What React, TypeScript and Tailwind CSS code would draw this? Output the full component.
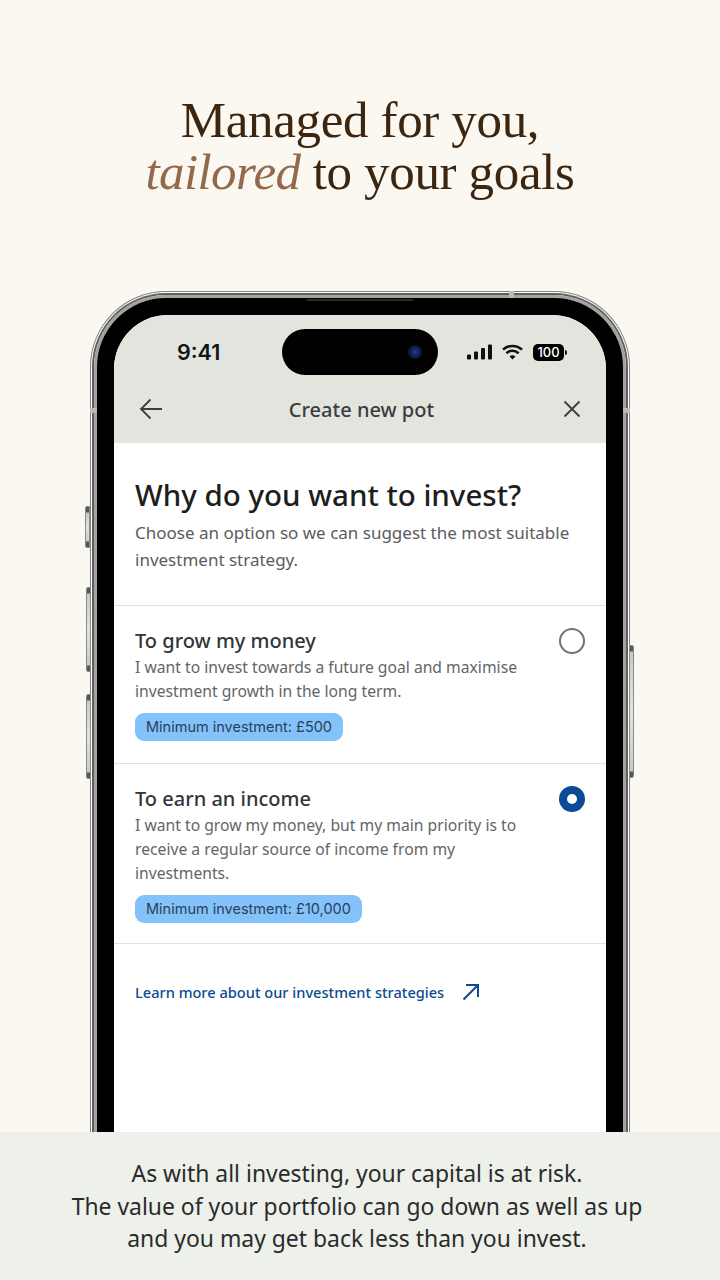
import React from "react";

const sans = "font-['Noto_Sans','Open_Sans',sans-serif]";

function SideButton({ cls }: { cls: string }) {
  return (
    <div
      className={`absolute w-[5px] border border-[#8a8a88] bg-[linear-gradient(to_bottom,#555_0px,#555_5px,#c9c9c6_6px,#e4e4e1_50%,#c9c9c6_calc(100%-6px),#555_calc(100%-5px),#555_100%)] ${cls}`}
    />
  );
}

function Pill({ children }: { children: React.ReactNode }) {
  return (
    <div className="mt-[10px] flex h-[28px] w-fit items-center rounded-[9px] bg-[#84c2fb] px-[11px] font-['Inter',sans-serif] text-[14.5px] text-[#2a3f55]">
      {children}
    </div>
  );
}

function Option({
  title,
  lines,
  pill,
  selected,
  cls,
}: {
  title: string;
  lines: string[];
  pill: string;
  selected?: boolean;
  cls: string;
}) {
  return (
    <div className={`relative border-b border-[#dfe0df] px-[21px] ${cls}`}>
      <div className="text-[20px] leading-[28px] font-medium text-[#333537]">{title}</div>
      <div className="text-[15.7px] leading-[24px] text-[#646668]">
        {lines.map((l) => (
          <div key={l}>{l}</div>
        ))}
      </div>
      <Pill>{pill}</Pill>
      {selected ? (
        <div className="absolute right-[21px] top-[22px] flex h-[26px] w-[26px] items-center justify-center rounded-full bg-[#0b4a96]">
          <div className="h-[10px] w-[10px] rounded-full bg-white" />
        </div>
      ) : (
        <div className="absolute right-[21px] top-[22px] h-[26px] w-[26px] rounded-full border-2 border-[#737373]" />
      )}
    </div>
  );
}

export default function App() {
  return (
    <div className={`relative flex h-[1280px] w-[720px] flex-col items-center overflow-hidden bg-[#fbf8f2] ${sans}`}>
      <h1 className="mt-[94px] text-center font-['Liberation_Serif',serif] text-[51px] leading-[52px] tracking-[-0.35px] text-[#3d2610]">
        Managed for you,
        <br />
        <em className="tracking-[-0.6px] text-[#93694a]">tailored</em> to your goals
      </h1>

      {/* phone */}
      <div className="relative mt-[93px] w-[540px] shrink-0 rounded-t-[76px] border border-b-0 border-[#808080] bg-white px-[1px] pt-[1px]">
        <SideButton cls="left-[-6px] top-[214px] h-[42px] rounded-l-[2px]" />
        <SideButton cls="left-[-5px] top-[295px] h-[85px] rounded-l-[2px]" />
        <SideButton cls="left-[-5px] top-[402px] h-[85px] rounded-l-[2px]" />
        <SideButton cls="right-[-5px] top-[353px] h-[133px] rounded-r-[2px]" />
        {/* antenna bands */}
        <div className="absolute left-[418px] top-[-1px] h-[7px] w-[5px] bg-[#b9b9b6]" />
        <div className="absolute left-[-1px] top-[116px] h-[5px] w-[7px] bg-[#b9b9b6]" />
        <div className="absolute right-[-1px] top-[116px] h-[5px] w-[7px] bg-[#b9b9b6]" />
        <div className="rounded-t-[74px] border-[2px] border-b-0 border-[#5f5f5d]">
          <div className="rounded-t-[72px] border-[3px] border-b-0 border-[#a3a3a0] bg-black px-[17px] pt-[17px]">
            <div className="absolute left-1/2 top-[7px] h-[2px] w-[108px] -translate-x-1/2 rounded-b-[3px] bg-[#2a2a2a]" />
            {/* screen */}
            <div className="relative h-[1000px] overflow-hidden rounded-t-[54px] bg-white">
              <div className="h-[128px] bg-[#e2e4dd]">
                <div className="flex h-[74px] items-center">
                  <span className="ml-[63px] w-[46px] font-['Inter',sans-serif] text-[21.5px] font-semibold text-[#141414]">9:41</span>
                  <div className="ml-[59px] flex h-[46px] w-[156px] items-center justify-end rounded-full bg-black pr-[16px]">
                    <div className="h-[14px] w-[14px] rounded-full bg-[radial-gradient(circle,#2a3a8c_0%,#101a48_50%,#0a0a14_100%)]" />
                  </div>
                  <div className="ml-[29px] flex items-center gap-[10px]">
                    <svg width="25" height="16" viewBox="0 0 25 16" fill="#111">
                      <rect x="0" y="10.5" width="4" height="5" rx="1" />
                      <rect x="7" y="7.5" width="4" height="8" rx="1" />
                      <rect x="14" y="4" width="4" height="11.5" rx="1" />
                      <rect x="21" y="0.5" width="4" height="15" rx="1" />
                    </svg>
                    <svg width="21" height="16" viewBox="0 0 21 16" fill="none" stroke="#111" strokeWidth="2.6">
                      <path d="M1 5.6C6.4 .7 14.6 .7 20 5.6" />
                      <path d="M4.4 9.2c3.6-3.2 8.6-3.2 12.2 0" />
                      <path d="M10.5 15.5l-3-3.1c1.7-1.5 4.3-1.5 6 0z" fill="#111" stroke="none" />
                    </svg>
                    <div className="flex items-center">
                      <div className="flex h-[17px] w-[31px] items-center justify-center rounded-[5px] bg-black font-['Inter',sans-serif] text-[13px] font-medium leading-none text-white">
                        100
                      </div>
                      <div className="ml-[1px] h-[5px] w-[2px] rounded-r-[2px] bg-[#111]" />
                    </div>
                  </div>
                </div>
                <div className="flex h-[40px] items-center justify-between pl-[25px] pr-[22px]">
                  <svg width="24" height="24" viewBox="0 0 24 24" fill="none" stroke="#3c3e40" strokeWidth="1.8">
                    <path d="M23 12H2M11.5 2.5L2 12l9.5 9.5" />
                  </svg>
                  <span className="pt-[2px] text-[20px] font-medium text-[#3b3d3f]">Create new pot</span>
                  <svg width="24" height="24" viewBox="0 0 24 24" fill="none" stroke="#3c3e40" strokeWidth="1.8">
                    <path d="M4.5 4.5l15 15M19.5 4.5l-15 15" />
                  </svg>
                </div>
              </div>

              <div className="border-b border-[#dfe0df] px-[21px] pt-[32px] pb-[32px]">
                <h2 className="text-[29.5px] leading-[40px] font-medium text-[#1d1e20]">Why do you want to invest?</h2>
                <p className="mt-[4px] text-[17px] leading-[27px] text-[#5a5c60]">
                  Choose an option so we can suggest the most suitable
                  <br />
                  investment strategy.
                </p>
              </div>

              <Option
                title="To grow my money"
                lines={[
                  "I want to invest towards a future goal and maximise",
                  "investment growth in the long term.",
                ]}
                pill="Minimum investment: £500"
                cls="pt-[21px] pb-[22px]"
              />
              <Option
                title="To earn an income"
                lines={[
                  "I want to grow my money, but my main priority is to",
                  "receive a regular source of income from my",
                  "investments.",
                ]}
                pill="Minimum investment: £10,000"
                selected
                cls="pt-[21px] pb-[20px]"
              />

              <div className="flex items-center pl-[21px] pt-[36px]">
                <span className="text-[14.6px] font-medium leading-[24px] text-[#0d4a8f]">
                  Learn more about our investment strategies
                </span>
                <svg className="ml-[18px]" width="18" height="18" viewBox="0 0 18 18" fill="none" stroke="#0d4a8f" strokeWidth="2">
                  <path d="M1.5 16.5L16 2M4 2h12v12" />
                </svg>
              </div>
            </div>
          </div>
        </div>
      </div>

      {/* disclaimer banner over phone */}
      <div className="absolute bottom-0 left-0 right-0 flex h-[148px] items-start justify-center bg-[#eef0ea] pr-[6px] pt-[26px] text-center text-[22.9px] leading-[32.5px] text-[#2a2b2c]">
        <div>
          As with all investing, your capital is at risk.
          <br />
          The value of your portfolio can go down as well as up
          <br />
          and you may get back less than you invest.
        </div>
      </div>
    </div>
  );
}
